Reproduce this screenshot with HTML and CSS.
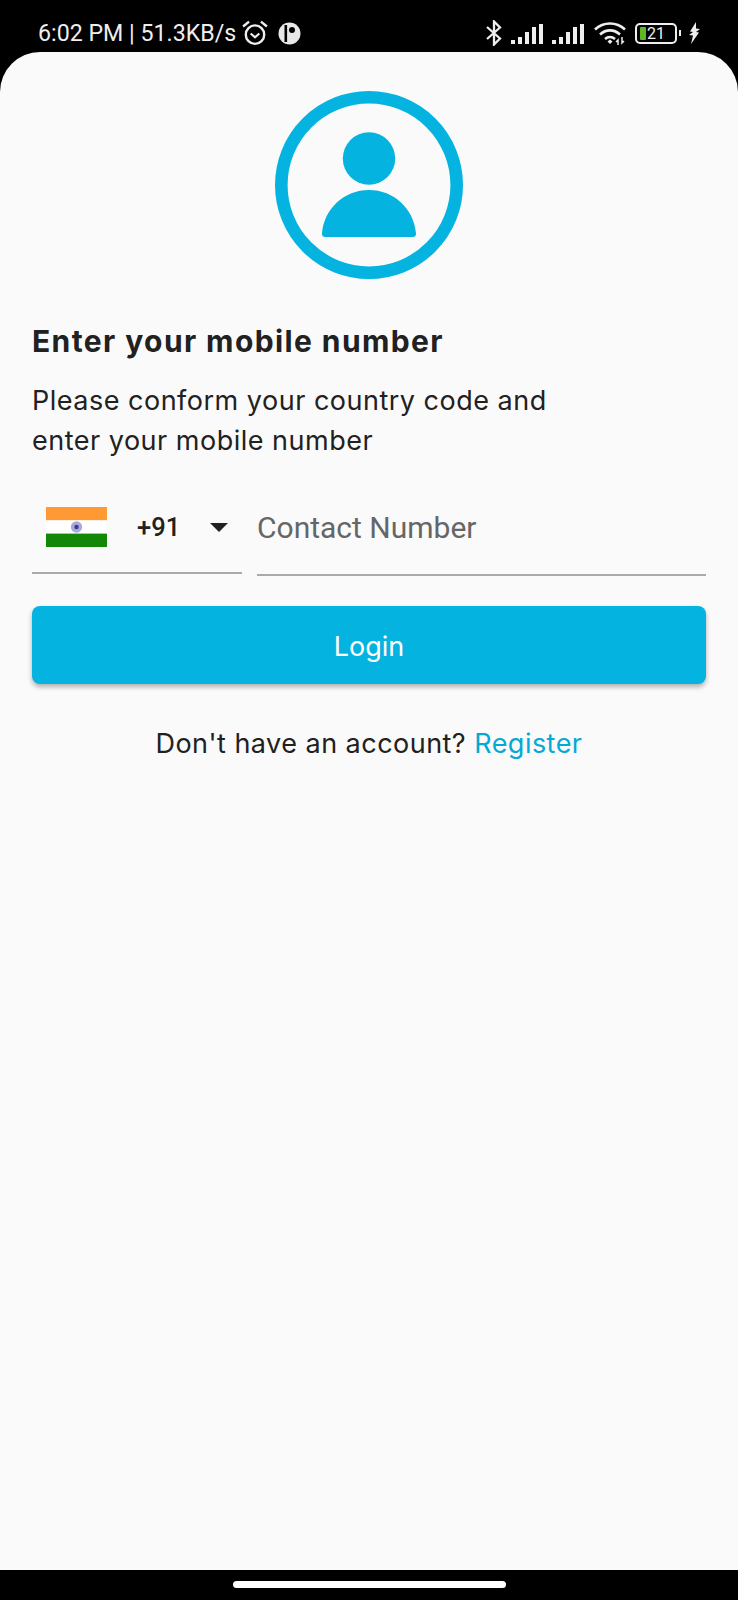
FILE: index.html
```html
<!DOCTYPE html>
<html lang="en">
<head>
<meta charset="utf-8">
<title>Login</title>
<link rel="stylesheet" href="styles.css">
</head>
<body>
<div class="screen">
  <header class="status">
    <span class="status-text">6:02 PM | 51.3KB/s</span>
    <svg class="ic-alarm" width="26" height="26" viewBox="0 0 24 24"><circle cx="12" cy="13.500" r="8.500" fill="none" stroke="#eee" stroke-width="2.200"/><path d="M8 12.500l4 3.500 4-3.500" fill="none" stroke="#eee" stroke-width="2"/><path d="M1 6L6.500 1.500M23 6L17.500 1.500" stroke="#eee" stroke-width="2.200" fill="none"/></svg>
    <svg class="ic-app" width="23" height="23" viewBox="0 0 23 23"><circle cx="11.500" cy="11.500" r="11" fill="#e8e8e8"/><rect x="6.500" y="3" width="2.600" height="17" fill="#000"/><circle cx="14" cy="8" r="3" fill="#000"/></svg>
    <span class="spacer"></span>
    <svg class="ic-bt" width="18" height="26" viewBox="0 0 18 26"><path d="M2 7l13 11.500-6 6V1.500l6 6L2 19" fill="none" stroke="#eee" stroke-width="2.300"/></svg>
    <svg class="ic-signal" width="33" height="21" viewBox="0 0 33 21"><path d="M0 17h4v4H0zM7 14h4v7H7zM14 9h4v12h-4zM21 4h4v17h-4zM28 1h4v20h-4z" fill="#eee"/></svg>
    <svg class="ic-signal" width="33" height="21" viewBox="0 0 33 21"><path d="M0 17h4v4H0zM7 14h4v7H7zM14 9h4v12h-4zM21 4h4v17h-4zM28 1h4v20h-4z" fill="#eee"/></svg>
    <svg class="ic-wifi" width="33" height="24" viewBox="0 0 33 24"><g fill="none" stroke="#eee" stroke-width="2.600"><path d="M1 8.500C9.500 .5 22.500 .5 31 8.500"/><path d="M6 13.500c6-5.500 14-5.500 20 0"/><path d="M11 18c3-2.500 7-2.500 10 0"/></g><path d="M13.500 20.500l2.500-2 2.500 2-2.500 2.500z" fill="#eee"/><path d="M24 24v-5l-2 2M28 16v6l2-2" fill="none" stroke="#eee" stroke-width="1.500"/></svg>
    <div class="battery">
      <span class="battery-fill"></span>
      <span class="battery-num">21</span>
    </div>
    <span class="battery-nub"></span>
    <svg class="ic-bolt" width="12" height="22" viewBox="0 0 12 22"><path d="M8 0L2 9.500l3 .5-4 3 4 .5-2 8.500 8-11.500-3-.5 4-3-4-.5z" fill="#eee"/></svg>
  </header>

  <main class="card">
    <svg class="avatar" width="188" height="188" viewBox="0 0 188 188">
      <circle cx="94" cy="94" r="87.700" fill="none" stroke="#04b3e0" stroke-width="12.600"/>
      <circle cx="94" cy="67.500" r="26.200" fill="#04b3e0"/>
      <path d="M50 146a3 3 0 0 1-3-3.500C49 118 69 99 94 99s45 19 47 43.500a3 3 0 0 1-3 3.500z" fill="#04b3e0"/>
    </svg>

    <h1 class="title">Enter your mobile number</h1>
    <p class="desc">Please conform your country code and<br>enter your mobile number</p>

    <div class="phone-row">
      <div class="country">
        <svg class="flag" width="61" height="40" viewBox="0 0 61 40">
          <rect width="61" height="13.400" fill="#ff9933"/>
          <rect y="13.400" width="61" height="13.200" fill="#fff"/>
          <rect y="26.600" width="61" height="13.400" fill="#138808"/>
          <circle cx="30.500" cy="20" r="5.700" fill="#a9a9dc"/>
          <circle cx="30.500" cy="20" r="2.200" fill="#3a3a90"/>
        </svg>
        <span class="code">+91</span>
        <span class="caret"></span>
      </div>
      <div class="number">Contact Number</div>
    </div>

    <button class="login" type="button">Login</button>

    <p class="signup">Don't have an account? <a class="register" href="#">Register</a></p>
  </main>

  <footer class="nav"><span class="home"></span></footer>
</div>
</body>
</html>
```

FILE: styles.css
```css
* { box-sizing: border-box; }
html, body { margin: 0; padding: 0; }
body { background: #000; }
.screen { width: 738px; height: 1600px; display: flex; flex-direction: column; background: #000; overflow: hidden; }

.status { height: 52px; flex: none; display: flex; align-items: center; padding: 14px 38px 0 38px; color: #eee; }
.status-text { font: 400 23.200px/26px Roboto, sans-serif; white-space: nowrap; }
.ic-alarm { margin-left: 6px; }
.ic-app { margin-left: 10px; }
.spacer { flex: 1; }
.ic-bt { margin-right: 8px; }
.ic-signal { margin-right: 8px; }
.ic-wifi { margin-right: 8px; margin-left: 1px; }
.battery { width: 42px; height: 21px; border: 2px solid #eee; border-radius: 5px; display: flex; align-items: center; padding-left: 3px; }
.battery-fill { width: 6px; height: 13px; background: #5fb820; border-radius: 1px; }
.battery-num { font: 400 16px/17px Roboto, sans-serif; color: #eee; margin-left: 1px; }
.battery-nub { width: 2px; height: 6px; background: #eee; margin-left: 2px; }
.ic-bolt { margin-left: 7px; }

.card { flex: 1; background: #fafafa; border-radius: 40px 40px 0 0; padding: 39px 32px 0; display: flex; flex-direction: column; }
.avatar { display: block; align-self: center; flex: none; }
.title { margin: 42px 0 0; font: 700 30px/40px Inter, sans-serif; color: #212121; letter-spacing: 1.400px; }
.desc { margin: 20px 0 0; font: 400 27px/40px Inter, sans-serif; color: #212121; letter-spacing: .5px; }

.phone-row { display: flex; gap: 15px; margin-top: 21px; }
.country { width: 210px; height: 92px; flex: none; display: flex; align-items: flex-start; padding: 25px 0 0 14px; border-bottom: 2px solid #aaa; }
.flag { display: block; flex: none; }
.code { margin-left: 30px; font: 500 25.500px/40px Roboto, sans-serif; color: #212121; }
.caret { width: 0; height: 0; margin: 16px 0 0 30px; border-style: solid; border-width: 9px 9px 0; border-color: #212121 transparent transparent; }
.number { flex: 1; height: 94px; padding-top: 26px; border-bottom: 2px solid #aaa; font: 400 30px/40px Roboto, sans-serif; color: #666; }

.login { display: block; margin-top: 30px; height: 78px; width: 100%; padding: 3px 0 0; border: 0; border-radius: 8px; background: #04b3e0; color: #fff; font: 400 27px/40px Inter, sans-serif; box-shadow: 0 3px 5px rgba(0,0,0,.3); }
.signup { margin: 40px 0 0; text-align: center; font: 400 27px/40px Inter, sans-serif; color: #212121; letter-spacing: .47px; }
.register { color: #04a9d6; text-decoration: none; }

.nav { height: 30px; flex: none; display: flex; justify-content: center; padding-top: 11px; }
.home { width: 273px; height: 7px; border-radius: 4px; background: #fff; }
```
